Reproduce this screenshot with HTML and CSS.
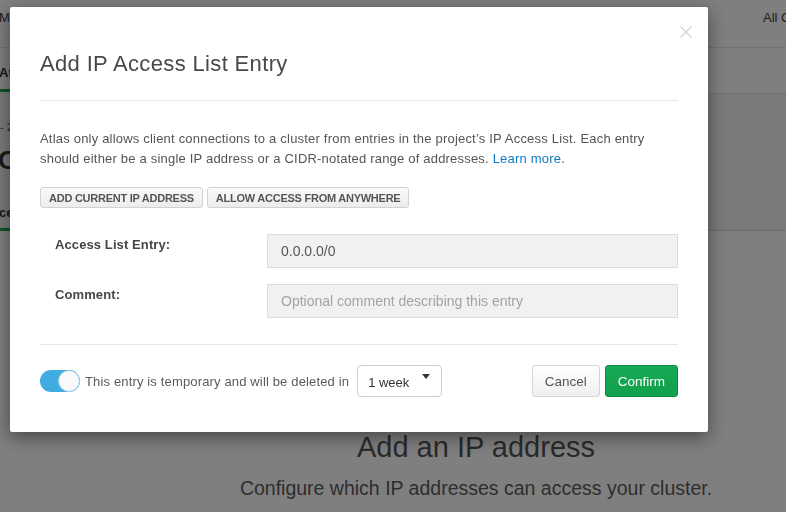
FILE: index.html
```html
<!DOCTYPE html>
<html lang="en">
<head>
<meta charset="utf-8">
<title>Add IP Access List Entry</title>
<link rel="stylesheet" href="styles.css">
</head>
<body>
<div class="page">
  <header class="topbar">
    <span class="brand">MongoDB</span>
    <span class="scope">All Clusters</span>
  </header>
  <nav class="tabbar">
    <span class="tab tab-active">Atlas</span>
  </nav>
  <section class="subhead">
    <div class="crumbs">- 2</div>
    <h1 class="page-title">O</h1>
    <div class="subtabs">
      <span class="subtab subtab-active">ce</span>
    </div>
  </section>
  <section class="hero">
    <h2 class="hero-title">Add an IP address</h2>
    <p class="hero-text">Configure which IP addresses can access your cluster.</p>
  </section>
</div>

<div class="overlay"></div>

<div class="modal" role="dialog">
  <button class="close" aria-label="Close">
    <svg width="12" height="12" viewBox="0 0 12 12"><path d="M0.5 0.5 L11.5 11.5 M11.5 0.5 L0.5 11.5" stroke="#d2d2d2" stroke-width="1.3" fill="none"/></svg>
  </button>
  <div class="modal-header">
    <h3 class="modal-title">Add IP Access List Entry</h3>
  </div>
  <div class="modal-body">
    <p class="intro">Atlas only allows client connections to a cluster from entries in the project’s IP Access List. Each entry should either be a single IP address or a CIDR-notated range of addresses. <a class="link" href="#">Learn more</a>.</p>
    <div class="quick">
      <button class="btn-small">ADD CURRENT IP ADDRESS</button>
      <button class="btn-small">ALLOW ACCESS FROM ANYWHERE</button>
    </div>
    <div class="form">
      <label class="label">Access List Entry:</label>
      <div class="input">0.0.0.0/0</div>
      <label class="label">Comment:</label>
      <div class="input placeholder">Optional comment describing this entry</div>
    </div>
  </div>
  <div class="modal-footer">
    <span class="toggle"><span class="knob"></span></span>
    <span class="temp-text">This entry is temporary and will be deleted in</span>
    <span class="select"><span class="select-value">1 week</span><span class="caret"></span></span>
    <span class="spacer"></span>
    <button class="btn btn-cancel">Cancel</button>
    <button class="btn btn-confirm">Confirm</button>
  </div>
</div>
</body>
</html>
```
FILE: styles.css
```css
* { box-sizing: border-box; }
html, body {
  margin: 0;
  padding: 0;
  width: 786px;
  height: 512px;
  overflow: hidden;
  font-family: "Liberation Sans", Arial, sans-serif;
  background: #ffffff;
}
.page {
  width: 786px;
  height: 512px;
  overflow: hidden;
  white-space: nowrap;
}
.topbar {
  height: 48px;
  border-bottom: 1px solid #e4e4e4;
  display: grid;
  grid-template-columns: 1fr 23px;
  align-items: center;
  padding-bottom: 12px;
  font-size: 13px;
  color: #3d3d3d;
}
.brand { margin-left: -1px; }
.tabbar {
  height: 46px;
  border-bottom: 1px solid #e0e0e0;
  display: flex;
  align-items: flex-end;
}
.tab {
  font-size: 13px;
  font-weight: bold;
  color: #333;
  padding-bottom: 9px;
  border-bottom: 3px solid transparent;
  margin-bottom: 1px;
}
.tab-active { border-bottom-color: #13aa52; margin-left: -1px; }
.subhead {
  height: 137px;
  background: #f5f5f5;
  border-bottom: 2px solid #e2e2e2;
  display: flex;
  flex-direction: column;
  padding-top: 26px;
}
.crumbs {
  font-size: 11px;
  color: #1a5b8c;
  line-height: 14px;
}
.page-title {
  margin: 11px 0 0 -2px;
  font-size: 26px;
  font-weight: bold;
  color: #333;
  line-height: 30px;
}
.subtabs {
  margin-top: auto;
  display: flex;
}
.subtab {
  font-size: 13px;
  font-weight: bold;
  color: #333;
  padding-bottom: 8px;
  border-bottom: 3px solid transparent;
  margin-bottom: -2px;
}
.subtab-active { border-bottom-color: #13aa52; margin-left: -1px; }
.hero {
  padding-left: 166px;
  padding-top: 198px;
  text-align: center;
}
.hero-title {
  margin: 0;
  font-size: 29px;
  font-weight: normal;
  line-height: 36px;
  color: #555;
}
.hero-text {
  margin: 11px 0 0;
  font-size: 19.5px;
  line-height: 24px;
  color: #5c5c5c;
}

.overlay {
  position: fixed;
  inset: 0;
  background: rgba(0, 0, 0, 0.5);
}

.modal {
  position: absolute;
  left: 10px;
  top: 7px;
  width: 698px;
  background: #fff;
  border-radius: 2px;
  box-shadow: 0 5px 18px rgba(0, 0, 0, 0.45);
  padding: 0 30px 35px;
}
.close {
  position: absolute;
  top: 19px;
  right: 16px;
  width: 12px;
  height: 12px;
  padding: 0;
  border: 0;
  background: none;
  display: block;
}
.close svg { display: block; }
.modal-header {
  padding: 42px 0 21px;
  border-bottom: 1px solid #e8e8e8;
}
.modal-title {
  margin: 0;
  font-size: 22px;
  font-weight: normal;
  line-height: 30px;
  color: #494949;
  letter-spacing: 0.35px;
}
.modal-body {
  padding-top: 28px;
  padding-bottom: 26px;
  border-bottom: 1px solid #e8e8e8;
}
.intro {
  margin: 0;
  font-size: 13px;
  line-height: 20px;
  color: #555;
  letter-spacing: 0.2px;
}
.link { color: #0e7ac4; text-decoration: none; }
.quick {
  margin-top: 18px;
  display: flex;
  gap: 4px;
}
.btn-small {
  height: 21px;
  padding: 0 8px;
  font-family: "Liberation Sans", Arial, sans-serif;
  font-size: 11px;
  font-weight: bold;
  letter-spacing: -0.25px;
  color: #555;
  background: linear-gradient(#fafafa, #ececec);
  border: 1px solid #d2d2d2;
  border-radius: 3px;
}
.form {
  margin-top: 26px;
  display: grid;
  grid-template-columns: 227px 1fr;
  row-gap: 16px;
  align-items: start;
}
.label {
  padding-left: 15px;
  padding-top: 1px;
  font-size: 13px;
  font-weight: bold;
  line-height: 20px;
  color: #464646;
  letter-spacing: 0.1px;
}
.input {
  height: 34px;
  display: flex;
  align-items: center;
  padding: 0 13px;
  font-size: 14px;
  color: #555;
  background: #f1f1f1;
  border: 1px solid #dcdcdc;
}
.input.placeholder { color: #a3a3a3; }

.modal-footer {
  padding-top: 20px;
  display: flex;
  align-items: center;
}
.toggle {
  position: relative;
  width: 40px;
  height: 22px;
  border-radius: 11px;
  background: #40ace2;
  margin-right: 5px;
  flex: none;
}
.knob {
  position: absolute;
  right: 0;
  top: 0;
  width: 22px;
  height: 22px;
  border-radius: 50%;
  background: #f9f9f9;
  border: 1px solid #9ccfea;
}
.temp-text {
  font-size: 13px;
  color: #5b5b5b;
  letter-spacing: 0.15px;
}
.select {
  margin-left: 8px;
  width: 85px;
  height: 32px;
  border: 1px solid #cfcfcf;
  border-radius: 4px;
  display: flex;
  padding-left: 10px;
  padding-right: 11px;
}
.select-value {
  align-self: center;
  font-size: 13px;
  color: #333;
  margin-top: 2px;
}
.caret {
  margin-left: auto;
  margin-top: 8px;
  width: 0;
  height: 0;
  border-left: 4px solid transparent;
  border-right: 4px solid transparent;
  border-top: 5px solid #333;
}
.spacer { flex: 1; }
.btn {
  height: 32px;
  padding: 0 12px;
  font-family: "Liberation Sans", Arial, sans-serif;
  font-size: 13.5px;
  border-radius: 3px;
}
.btn-cancel {
  color: #555;
  background: linear-gradient(#ffffff, #efefef);
  border: 1px solid #d4d4d4;
  margin-right: 5px;
}
.btn-confirm {
  color: #fff;
  background: linear-gradient(#17a955, #11a04b);
  border: 1px solid #0f8a43;
}
```
